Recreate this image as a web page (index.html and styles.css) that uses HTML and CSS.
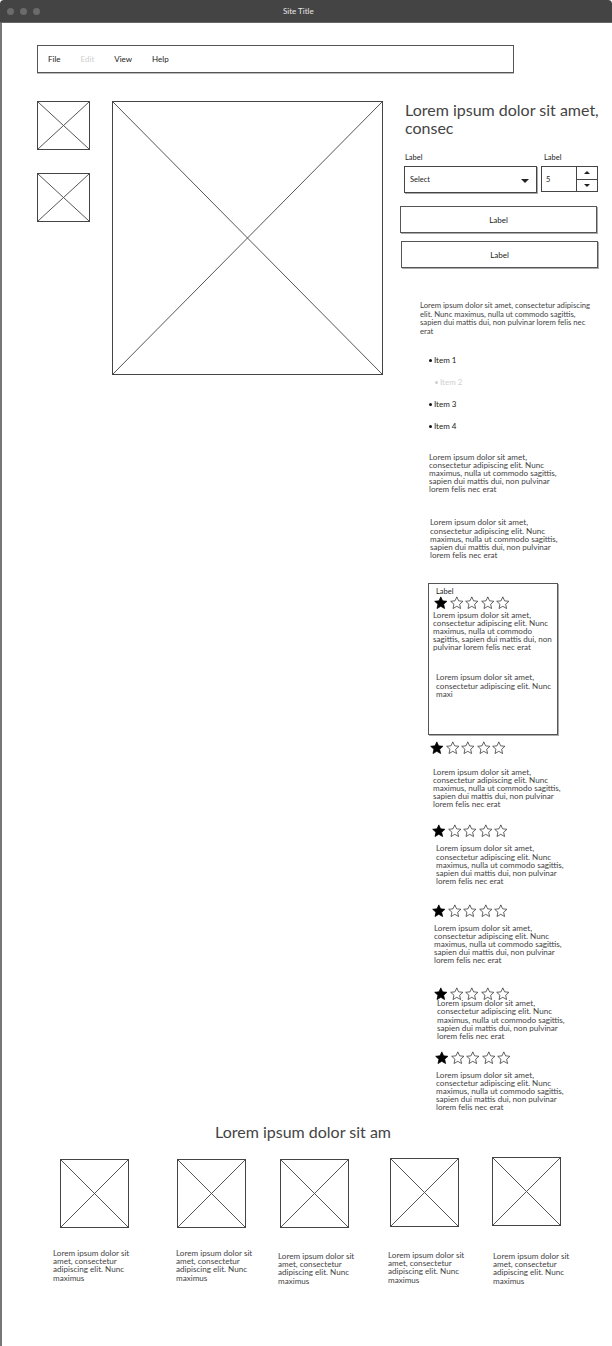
FILE: index.html
```html
<!DOCTYPE html>
<html>
<head>
<meta charset="utf-8">
<link rel="stylesheet" href="styles.css">
</head>
<body>
<svg class="defs" width="0" height="0" aria-hidden="true">
  <defs>
    <symbol id="star" viewBox="0 0 24 24">
      <polygon points="12,1.5 15.1,8.3 22.5,9.1 16.9,14.1 18.5,21.5 12,17.7 5.5,21.5 7.1,14.1 1.5,9.1 8.9,8.3"/>
    </symbol>
    <symbol id="cross" viewBox="0 0 100 100" preserveAspectRatio="none">
      <line x1="0" y1="0" x2="100" y2="100" vector-effect="non-scaling-stroke"/>
      <line x1="100" y1="0" x2="0" y2="100" vector-effect="non-scaling-stroke"/>
    </symbol>
  </defs>
</svg>
<div class="window">
  <header class="titlebar">
    <div class="dots"><span></span><span></span><span></span></div>
    <div class="title">Site Title</div>
  </header>
  <div class="page">
    <nav class="menubar">
      <span class="menu-item">File</span>
      <span class="menu-item disabled">Edit</span>
      <span class="menu-item">View</span>
      <span class="menu-item">Help</span>
    </nav>

    <div class="main">
      <div class="thumbs">
        <div class="ph thumb"><svg><use href="#cross"/></svg></div>
        <div class="ph thumb"><svg><use href="#cross"/></svg></div>
      </div>
      <div class="ph hero"><svg><use href="#cross"/></svg></div>

      <aside class="side">
        <h1 class="heading">Lorem ipsum dolor sit amet, consec</h1>

        <div class="fields">
          <div class="field field-select">
            <div class="label">Label</div>
            <div class="select">
              <span>Select</span>
              <span class="caret"></span>
            </div>
          </div>
          <div class="field field-num">
            <div class="label">Label</div>
            <div class="stepper">
              <span class="num">5</span>
              <span class="steps">
                <span class="step"><span class="up"></span></span>
                <span class="step"><span class="down"></span></span>
              </span>
            </div>
          </div>
        </div>

        <div class="btn btn1">Label</div>
        <div class="btn btn2">Label</div>

        <p class="text p1">Lorem ipsum dolor sit amet, consectetur adipiscing elit. Nunc maximus, nulla ut commodo sagittis, sapien dui mattis dui, non pulvinar lorem felis nec erat</p>

        <ul class="list">
          <li>Item 1</li>
          <li class="disabled sub">Item 2</li>
          <li>Item 3</li>
          <li>Item 4</li>
        </ul>

        <p class="text narrow p2">Lorem ipsum dolor sit amet, consectetur adipiscing elit. Nunc maximus, nulla ut commodo sagittis, sapien dui mattis dui, non pulvinar lorem felis nec erat</p>
        <p class="text narrow p3">Lorem ipsum dolor sit amet, consectetur adipiscing elit. Nunc maximus, nulla ut commodo sagittis, sapien dui mattis dui, non pulvinar lorem felis nec erat</p>

        <div class="card">
          <div class="card-label">Label</div>
          <div class="stars card-stars">
            <svg class="on"><use href="#star"/></svg><svg><use href="#star"/></svg><svg><use href="#star"/></svg><svg><use href="#star"/></svg><svg><use href="#star"/></svg>
          </div>
          <p class="text card-text">Lorem ipsum dolor sit amet, consectetur adipiscing elit. Nunc maximus, nulla ut commodo sagittis, sapien dui mattis dui, non pulvinar lorem felis nec erat</p>
          <p class="text card-text2">Lorem ipsum dolor sit amet, consectetur adipiscing elit. Nunc maxi</p>
        </div>

        <div class="review r1">
          <div class="stars"><svg class="on"><use href="#star"/></svg><svg><use href="#star"/></svg><svg><use href="#star"/></svg><svg><use href="#star"/></svg><svg><use href="#star"/></svg></div>
          <p class="text narrow">Lorem ipsum dolor sit amet, consectetur adipiscing elit. Nunc maximus, nulla ut commodo sagittis, sapien dui mattis dui, non pulvinar lorem felis nec erat</p>
        </div>
        <div class="review r2">
          <div class="stars"><svg class="on"><use href="#star"/></svg><svg><use href="#star"/></svg><svg><use href="#star"/></svg><svg><use href="#star"/></svg><svg><use href="#star"/></svg></div>
          <p class="text narrow">Lorem ipsum dolor sit amet, consectetur adipiscing elit. Nunc maximus, nulla ut commodo sagittis, sapien dui mattis dui, non pulvinar lorem felis nec erat</p>
        </div>
        <div class="review r3">
          <div class="stars"><svg class="on"><use href="#star"/></svg><svg><use href="#star"/></svg><svg><use href="#star"/></svg><svg><use href="#star"/></svg><svg><use href="#star"/></svg></div>
          <p class="text narrow">Lorem ipsum dolor sit amet, consectetur adipiscing elit. Nunc maximus, nulla ut commodo sagittis, sapien dui mattis dui, non pulvinar lorem felis nec erat</p>
        </div>
        <div class="review r4">
          <div class="stars"><svg class="on"><use href="#star"/></svg><svg><use href="#star"/></svg><svg><use href="#star"/></svg><svg><use href="#star"/></svg><svg><use href="#star"/></svg></div>
          <p class="text narrow">Lorem ipsum dolor sit amet, consectetur adipiscing elit. Nunc maximus, nulla ut commodo sagittis, sapien dui mattis dui, non pulvinar lorem felis nec erat</p>
        </div>
        <div class="review r5">
          <div class="stars"><svg class="on"><use href="#star"/></svg><svg><use href="#star"/></svg><svg><use href="#star"/></svg><svg><use href="#star"/></svg><svg><use href="#star"/></svg></div>
          <p class="text narrow">Lorem ipsum dolor sit amet, consectetur adipiscing elit. Nunc maximus, nulla ut commodo sagittis, sapien dui mattis dui, non pulvinar lorem felis nec erat</p>
        </div>
      </aside>
    </div>

    <section class="gallery">
      <h2 class="heading center">Lorem ipsum dolor sit am</h2>
      <div class="tiles">
        <div class="tile t1">
          <div class="ph tile-img"><svg><use href="#cross"/></svg></div>
          <p class="text caption">Lorem ipsum dolor sit amet, consectetur adipiscing elit. Nunc maximus</p>
        </div>
        <div class="tile t2">
          <div class="ph tile-img"><svg><use href="#cross"/></svg></div>
          <p class="text caption">Lorem ipsum dolor sit amet, consectetur adipiscing elit. Nunc maximus</p>
        </div>
        <div class="tile t3">
          <div class="ph tile-img"><svg><use href="#cross"/></svg></div>
          <p class="text caption">Lorem ipsum dolor sit amet, consectetur adipiscing elit. Nunc maximus</p>
        </div>
        <div class="tile t4">
          <div class="ph tile-img"><svg><use href="#cross"/></svg></div>
          <p class="text caption">Lorem ipsum dolor sit amet, consectetur adipiscing elit. Nunc maximus</p>
        </div>
        <div class="tile t5">
          <div class="ph tile-img"><svg><use href="#cross"/></svg></div>
          <p class="text caption">Lorem ipsum dolor sit amet, consectetur adipiscing elit. Nunc maximus</p>
        </div>
      </div>
    </section>
  </div>
</div>
</body>
</html>
```

FILE: styles.css
```css
* { box-sizing: border-box; }

html, body {
  margin: 0;
  padding: 0;
  background: #fff;
}

body {
  font-family: Lato, "Noto Sans", "Liberation Sans", sans-serif;
  color: #333;
  width: 612px;
  overflow: hidden;
}

.defs { position: absolute; width: 0; height: 0; overflow: hidden; }

.window { width: 612px; }

/* ---------- title bar ---------- */
.titlebar {
  height: 23px;
  background: #444;
  border-radius: 4px 4px 0 0;
  display: flex;
  align-items: center;
  padding-left: 7px;
  border-bottom: 1px solid #666;
}
.dots { display: flex; gap: 6px; width: 290px; }
.dots span {
  width: 7px;
  height: 7px;
  border-radius: 50%;
  background: #6b6b6b;
}
.title {
  color: #e6e6e6;
  font-size: 8px;
  margin-left: -14px;
}

/* ---------- page ---------- */
.page {
  border-left: 2px solid #777;
  min-height: 1323px;
  padding-top: 22px;
}

.menubar {
  margin-left: 35px;
  width: 477px;
  height: 28px;
  border: 1px solid #555;
  box-shadow: 0 1px 0 #bbb;
  display: flex;
  align-items: center;
  padding-left: 10px;
  gap: 20px;
  font-size: 8px;
  color: #222;
}
.menu-item.disabled { color: #cfcfcf; }

.main {
  display: flex;
  align-items: flex-start;
  margin-top: 28px;
  margin-left: 35px;
}

/* placeholders */
.ph {
  border: 1px solid #444;
  background: #fff;
}
.ph svg {
  display: block;
  width: 100%;
  height: 100%;
  stroke: #555;
  stroke-width: 1;
}

.thumbs {
  display: flex;
  flex-direction: column;
  gap: 23px;
}
.thumb { width: 53px; height: 49px; }

.hero {
  width: 271px;
  height: 274px;
  margin-left: 22px;
}

/* ---------- side column ---------- */
.side {
  width: 199px;
  margin-left: 17px;
}

.heading {
  margin: 0 0 0 5px;
  font-size: 16px;
  line-height: 18px;
  font-weight: 400;
  color: #444;
}

.fields {
  display: flex;
  margin-top: 16px;
  margin-left: 4px;
}
.label {
  font-size: 7.5px;
  line-height: 9px;
  margin-bottom: 4px;
  color: #222;
}
.field-select { width: 133px; }
.field-select .label { padding-left: 1px; }
.field-num { width: 57px; margin-left: 4px; }
.field-num .label { padding-left: 3px; }

.select {
  height: 27px;
  border: 1px solid #444;
  box-shadow: 1px 1px 0 #aaa;
  display: flex;
  align-items: center;
  justify-content: space-between;
  padding: 0 7px 0 5px;
  font-size: 7.5px;
  color: #222;
}
.caret {
  width: 0;
  height: 0;
  border-left: 4px solid transparent;
  border-right: 4px solid transparent;
  border-top: 4px solid #222;
  margin-top: 2px;
}

.stepper {
  height: 26px;
  border: 1px solid #444;
  display: flex;
  font-size: 7.5px;
  color: #222;
}
.num {
  flex: 1;
  display: flex;
  align-items: center;
  padding-left: 4px;
  border-right: 1px solid #444;
}
.steps {
  width: 20px;
  display: flex;
  flex-direction: column;
}
.step {
  flex: 1;
  display: flex;
  align-items: center;
  justify-content: center;
}
.step + .step { border-top: 1px solid #444; }
.up, .down {
  width: 0; height: 0;
  border-left: 3.5px solid transparent;
  border-right: 3.5px solid transparent;
}
.up { border-bottom: 3.5px solid #222; }
.down { border-top: 3.5px solid #222; }

.btn {
  width: 197px;
  height: 27px;
  border: 1px solid #555;
  box-shadow: 1px 1px 0 #aaa;
  display: flex;
  align-items: center;
  justify-content: center;
  font-size: 8px;
  color: #222;
}
.btn1 { margin-top: 13px; }
.btn2 { margin-top: 8px; margin-left: 1px; }

.text {
  margin: 0;
  font-size: 8.1px;
  line-height: 8.1px;
  color: #444;
}
.p1 {
  margin: 33px 0 0 20px;
  width: 174px;
  font-size: 7.7px;
  line-height: 8.5px;
}
.narrow { width: 128px; }

.list {
  list-style: none;
  margin: 14px 0 0 29px;
  padding: 0;
  font-size: 8px;
  color: #222;
}
.list li {
  height: 22px;
  line-height: 22px;
  display: flex;
  align-items: center;
  gap: 1px;
}
.list li::before {
  content: "";
  width: 3px;
  height: 3px;
  border-radius: 50%;
  background: #111;
  margin-right: 1px;
}
.list li.disabled { color: #cfcfcf; }
.list li.disabled::before { background: #cfcfcf; }
.list li.sub { padding-left: 6px; }

.p2 { margin: 16px 0 0 29px; }
.p3 { margin: 25px 0 0 30px; }

/* rating card */
.card {
  margin: 24px 0 0 28px;
  width: 130px;
  height: 152px;
  border: 1px solid #555;
  box-shadow: 1px 1px 0 #aaa;
  padding: 3px 0 0 4px;
}
.card-label {
  font-size: 7.5px;
  line-height: 9px;
  padding-left: 3px;
  color: #222;
}
.stars {
  display: flex;
  height: 14px;
}
.stars svg {
  width: 15.6px;
  height: 14px;
  fill: #fff;
  stroke: #333;
  stroke-width: 1.3;
}
.stars svg.on { fill: #000; stroke: #000; }
.card-text { width: 121px; margin-top: 1px; }
.card-text2 { width: 118px; margin: 22px 0 0 3px; }

/* reviews */
.r1 { margin: 6px 0 0 29px; }
.r1 .text { margin: 13px 0 0 4px; }
.r2 { margin: 16px 0 0 31px; }
.r2 .text { margin: 6px 0 0 5px; }
.r3 { margin: 19px 0 0 31px; }
.r3 .text { margin: 6px 0 0 3px; }
.r4 { margin: 23px 0 0 33px; }
.r4 .text { margin: -2px 0 0 4px; }
.r5 { margin: 11px 0 0 34px; }
.r5 .text { margin: 6px 0 0 2px; }

/* ---------- gallery ---------- */
.gallery { margin-top: 12px; }
.heading.center {
  margin: 0;
  text-align: center;
  padding-right: 8px;
}
.tiles {
  display: flex;
  align-items: flex-start;
  margin-top: 18px;
}
.tile {
  width: 84px;
  display: flex;
  flex-direction: column;
}
.tile-img { width: 69px; height: 69px; }
.caption { width: 84px; margin-top: 21px; }
.t1 { margin-left: 51px; }
.t1 .tile-img { margin-left: 7px; }
.t2 { margin-left: 39px; }
.t2 .tile-img { margin-left: 1px; }
.t3 { margin-left: 18px; }
.t3 .tile-img { margin-left: 2px; }
.t3 .caption { margin-top: 24px; }
.t4 { margin-left: 26px; margin-top: -1px; }
.t4 .tile-img { margin-left: 2px; }
.t4 .caption { margin-top: 24px; }
.t5 { margin-left: 20px; margin-top: -2px; }
.t5 .caption { margin-left: 1px; margin-top: 26px; }
```
